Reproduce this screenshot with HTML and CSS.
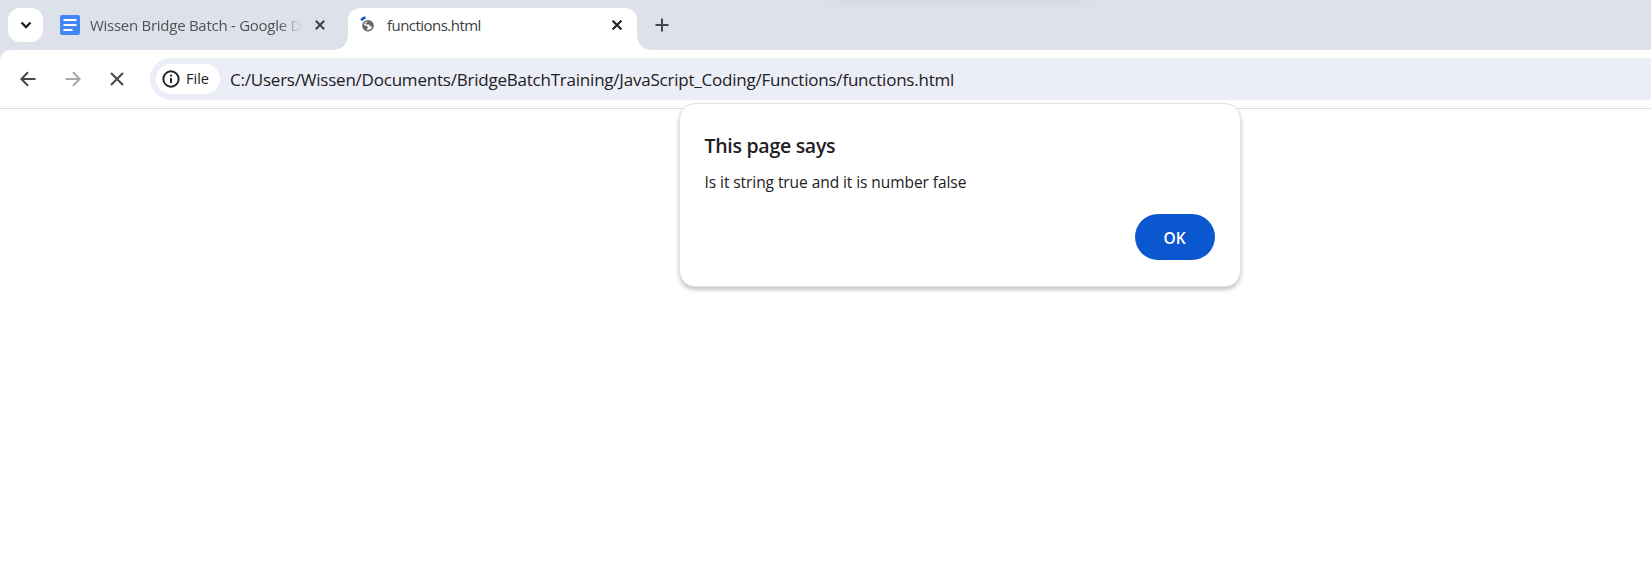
FILE: index.html
```html
<!DOCTYPE html>
<html lang="en">
<head>
<meta charset="utf-8">
<title>functions.html</title>
<link rel="stylesheet" href="styles.css">
</head>
<body>
<header class="tab-strip">
  <div class="top-shadow"></div>
  <button class="tab-search" aria-label="Search tabs"><svg width="12" height="8" viewBox="0 0 12 8"><path d="M1.500 1.500 6 6l4.500-4.500" fill="none" stroke="#1f2023" stroke-width="2.300"/></svg></button>
  <div class="tab">
    <svg class="docs-icon" width="20" height="20" viewBox="0 0 20 20"><rect width="20" height="20" rx="2" fill="#4285f4"/><path d="M3.500 5h13M3.500 10h13M3.500 15h9" stroke="#fff" stroke-width="2"/></svg>
    <span class="tab-title tab-title-faded">Wissen Bridge Batch - Google D</span>
    <svg class="tab-close" width="10" height="10" viewBox="0 0 10 10"><path d="m.8.8 8.400 8.400M9.200.8.8 9.200" stroke="#3c4043" stroke-width="2"/></svg>
  </div>
  <div class="tab tab-active">
    <svg class="globe-icon" width="14" height="16" viewBox="0 0 14 16"><path d="M1.200 4.300Q2.800 2 5.500 1.500" fill="none" stroke="#0b57d0" stroke-width="2.400"/><circle cx="8" cy="9.700" r="5" fill="#fff" stroke="#5f6368" stroke-width="1.500"/><path d="M3 8.500 7.800 10.700v1.400l-1 .8v1.800C4 14 2.500 11.500 3 8.500ZM8.500 4.900 7 6.500l-1.400.8.3 1.200h3.300l1.200 2h2.500C13.500 7.500 11.500 5 8.500 4.900Z" fill="#5f6368"/></svg>
    <span class="tab-title tab-title-active">functions.html</span>
    <svg class="tab-close" width="10" height="10" viewBox="0 0 10 10"><path d="m.6.6 8.800 8.800M9.400.6.6 9.400" stroke="#1f2023" stroke-width="2.100"/></svg>
  </div>
  <svg class="new-tab" width="14" height="14" viewBox="0 0 14 14"><path d="M7 .5v13M.5 7h13" stroke="#45474a" stroke-width="2"/></svg>
</header>
<nav class="toolbar">
  <svg class="nav-icon" width="16" height="16" viewBox="0 0 16 16"><path d="M15.500 8H2M8 1.300 1.400 8 8 14.700" fill="none" stroke="#47484a" stroke-width="2"/></svg>
  <svg class="nav-icon" width="16" height="16" viewBox="0 0 16 16"><path d="M.5 8H14M8 1.300 14.600 8 8 14.700" fill="none" stroke="#a9a9aa" stroke-width="2"/></svg>
  <svg class="nav-icon stop" width="14" height="14" viewBox="0 0 14 14"><path d="m1 1 12 12M13 1 1 13" stroke="#47484a" stroke-width="2"/></svg>
  <div class="address">
    <div class="chip">
      <svg width="18" height="18" viewBox="0 0 18 18"><circle cx="9" cy="9" r="7.700" fill="none" stroke="#1f2023" stroke-width="1.900"/><path d="M9 8v5M9 4.700v1.900" stroke="#1f2023" stroke-width="1.900"/></svg>
      <span class="chip-label">File</span>
    </div>
    <span class="url">C:/Users/Wissen/Documents/BridgeBatchTraining/JavaScript_Coding/Functions/functions.html</span>
  </div>
</nav>
<main class="page">
  <section class="dialog" role="alertdialog">
    <h1 class="dialog-title"><span>This page says</span></h1>
    <p class="dialog-message"><span>Is it string true and it is number false</span></p>
    <button class="ok"><span>OK</span></button>
  </section>
</main>
</body>
</html>
```
FILE: styles.css
```css
* { box-sizing: border-box; }
body { margin: 0; height: 563px; overflow: hidden; background: #fff; color: #1f2023; font-family: "Open Sans", "Noto Sans", sans-serif; }
button { border: 0; padding: 0; font-family: inherit; }
svg { display: block; flex: none; }
span { white-space: nowrap; }
.tab-strip { display: flex; height: 60px; background: #dde1e9; padding-left: 8px; position: relative; }
.top-shadow { position: absolute; left: 835px; top: -10px; width: 250px; height: 8px; box-shadow: 0 0 14px 3px #d2d6df; }
.tab-search { display: flex; align-items: center; justify-content: center; width: 35px; height: 34px; margin-top: 8px; border-radius: 12px; background: #fff; }
.tab { display: flex; align-items: center; height: 35px; margin-top: 8px; }
.docs-icon { margin: -1px 10px 0 17px; }
.tab-title { margin-top: -2px; font-size: 15px; line-height: 20px; color: #3c4043; font-weight: 400; }
.tab-title-active { letter-spacing: -0.530px; }
.tab-title-faded { width: 212px; letter-spacing: -0.270px; color: #505255; mask-image: linear-gradient(to right, #000 188px, transparent 212px); }
.tab-close { margin: -1px 0 0 13px; }
.tab-active { position: relative; width: 289px; height: 42px; margin-left: 23px; padding: 0 15px 7px 12px; background: #fff; border-radius: 12px 12px 0 0; }
.tab-active::before, .tab-active::after { content: ""; position: absolute; bottom: 0; width: 14px; height: 14px; }
.tab-active::before { left: -14px; background: radial-gradient(circle at 0 0, transparent 13.500px, #fff 14px); }
.tab-active::after { right: -14px; background: radial-gradient(circle at 100% 0, transparent 13.500px, #fff 14px); }
.globe-icon { margin: -4px 13px 0 0; }
.tab-active .tab-close { margin-left: auto; }
.new-tab { margin: 18px 0 0 18px; }
.toolbar { display: flex; align-items: center; position: relative; height: 59px; margin-top: -10px; padding-left: 20px; background: #fff; border-bottom: 1px solid #dfdfdf; border-top-left-radius: 10px; }
.nav-icon { margin-right: 29px; }
.stop { margin: 0 26px 0 0; }
.address { display: flex; align-items: center; flex: 1; height: 42px; padding-left: 6px; background: #ebeef7; border-radius: 21px 0 0 21px; }
.chip { display: flex; align-items: center; gap: 6px; width: 64px; height: 30px; padding-left: 6px; border-radius: 15px; background: #fff; }
.chip-label { margin-top: -2px; font-size: 14.500px; font-weight: 500; }
.url { margin: 1px 0 0 10px; font-size: 17px; line-height: 24px; letter-spacing: -0.220px; }
.page { display: flex; justify-content: center; padding-left: 268px; }
.dialog { display: flex; flex-direction: column; position: relative; width: 562px; height: 184px; margin-top: -6px; padding: 26px 25px; border: 1px solid #e0e1e1; border-radius: 16px; background: #fff; box-shadow: 0 3px 4px #c6c9c8; }
.dialog-title { margin: 0; font-size: 19.500px; font-weight: 550; line-height: 31px; letter-spacing: -0.280px; }
.dialog-message { margin: 10px 0 0; font-size: 15.500px; line-height: 22px; letter-spacing: -0.070px; }
.ok { align-self: flex-end; width: 80px; height: 47px; margin-top: 21px; padding-top: 2px; border-radius: 24px; background: #0b57d0; color: #fff; font-size: 15.500px; font-weight: 600; }
```
